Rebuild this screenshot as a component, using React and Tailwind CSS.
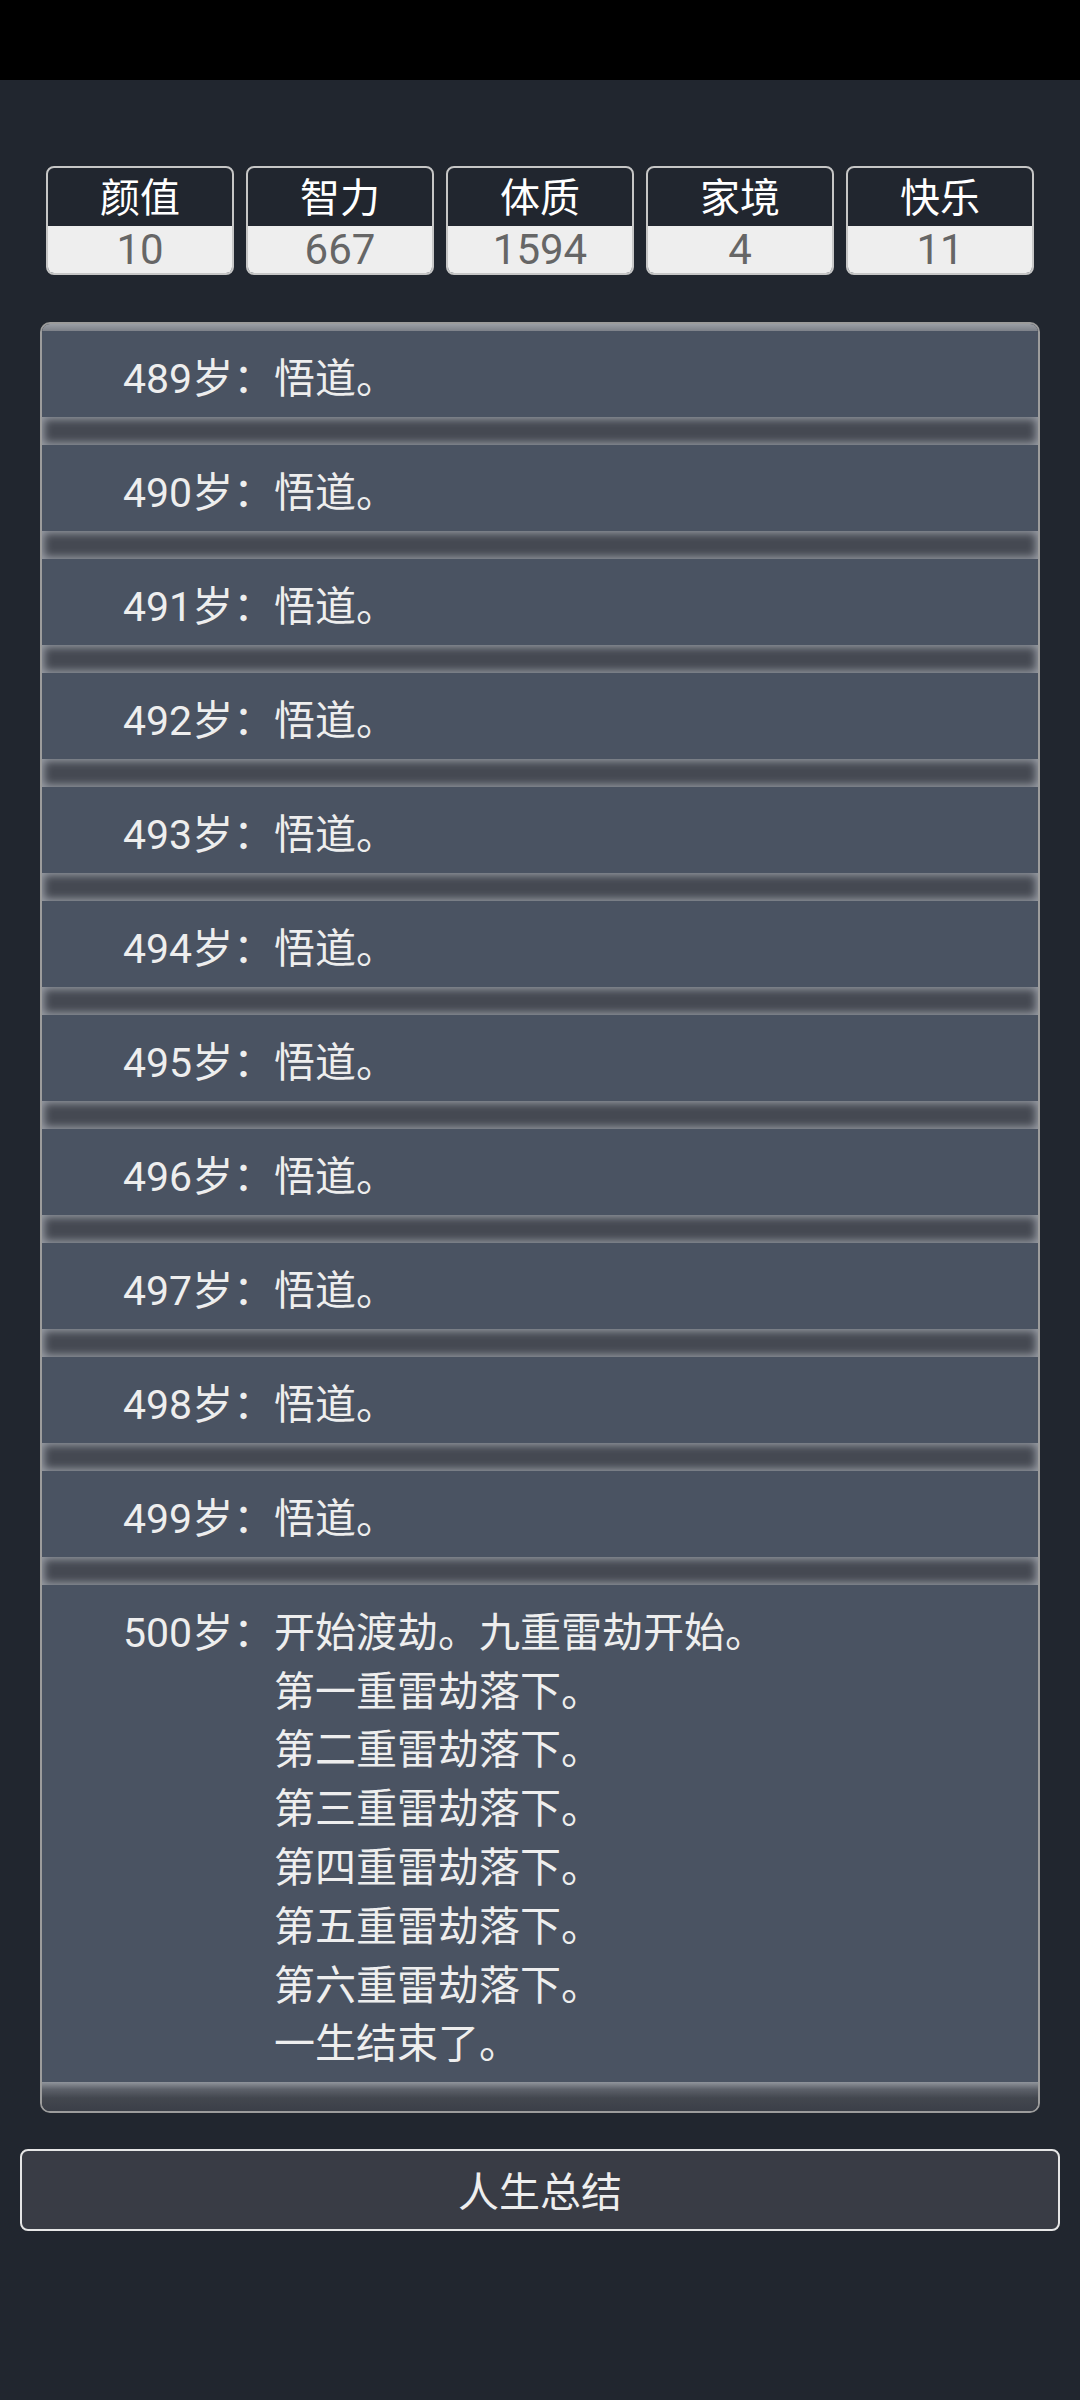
import React from "react";

const stats = [
  ["颜值", "10"],
  ["智力", "667"],
  ["体质", "1594"],
  ["家境", "4"],
  ["快乐", "11"],
];

const rows = [489, 490, 491, 492, 493, 494, 495, 496, 497, 498, 499];

const lastLines = [
  "开始渡劫。九重雷劫开始。",
  "第一重雷劫落下。",
  "第二重雷劫落下。",
  "第三重雷劫落下。",
  "第四重雷劫落下。",
  "第五重雷劫落下。",
  "第六重雷劫落下。",
  "一生结束了。",
];

const font = { fontFamily: 'Roboto, "Noto Sans CJK SC", sans-serif' };

function Row({ age, lines }) {
  return (
    <div className="flex bg-[#4a5362] pl-[81px] pt-[19px] pb-[8.2px] text-[41px] leading-[58.8px] text-[#eeeeee]">
      <div className="w-[151px] shrink-0 whitespace-nowrap">{age}岁：</div>
      <div className="flex flex-col">
        {lines.map((l, i) => (
          <div key={i} className="whitespace-nowrap">
            {l}
          </div>
        ))}
      </div>
    </div>
  );
}

function Sep() {
  return (
    <div className="h-[28px] bg-[#454952] shadow-[inset_0_0_9px_2px_#9a9ea6]" />
  );
}

export default function App() {
  return (
    <div className="w-[1080px] h-[2400px] bg-[#21262f] flex flex-col" style={font}>
      <div className="h-[80px] bg-black shrink-0" />
      <div className="mt-[86px] px-[46px] grid grid-cols-5 gap-[12px]">
        {stats.map(([label, value]) => (
          <div
            key={label}
            className="h-[109px] border-2 border-[#c6c6c6] rounded-[8px] overflow-hidden flex flex-col"
          >
            <div className="h-[58px] pt-[4px] flex items-center justify-center text-[40px] leading-none text-white">
              {label}
            </div>
            <div className="flex-1 bg-[#eeeeee] flex items-center justify-center text-[42px] leading-none text-[#666666]">
              {value}
            </div>
          </div>
        ))}
      </div>
      <div className="mt-[47px] mx-[40px] border-2 border-[#9c9c9c] rounded-[10px] overflow-hidden flex flex-col">
        <div className="h-[7px] bg-[linear-gradient(to_bottom,#9a9ea5,#7d8189)]" />
        {rows.map((a) => (
          <React.Fragment key={a}>
            <Row age={a} lines={["悟道。"]} />
            <Sep />
          </React.Fragment>
        ))}
        <Row age={500} lines={lastLines} />
        <div className="h-[29px] bg-[linear-gradient(to_bottom,#91959c_0%,#5d616a_25%,#43474f_55%,#3b3f48_100%)]" />
      </div>
      <div className="mt-[36px] mx-[20px] h-[82px] pt-[6px] border-2 border-[#e6e6e6] rounded-[8px] bg-[#393c45] flex items-center justify-center text-[41px] text-[#eeeeee]">
        人生总结
      </div>
    </div>
  );
}
